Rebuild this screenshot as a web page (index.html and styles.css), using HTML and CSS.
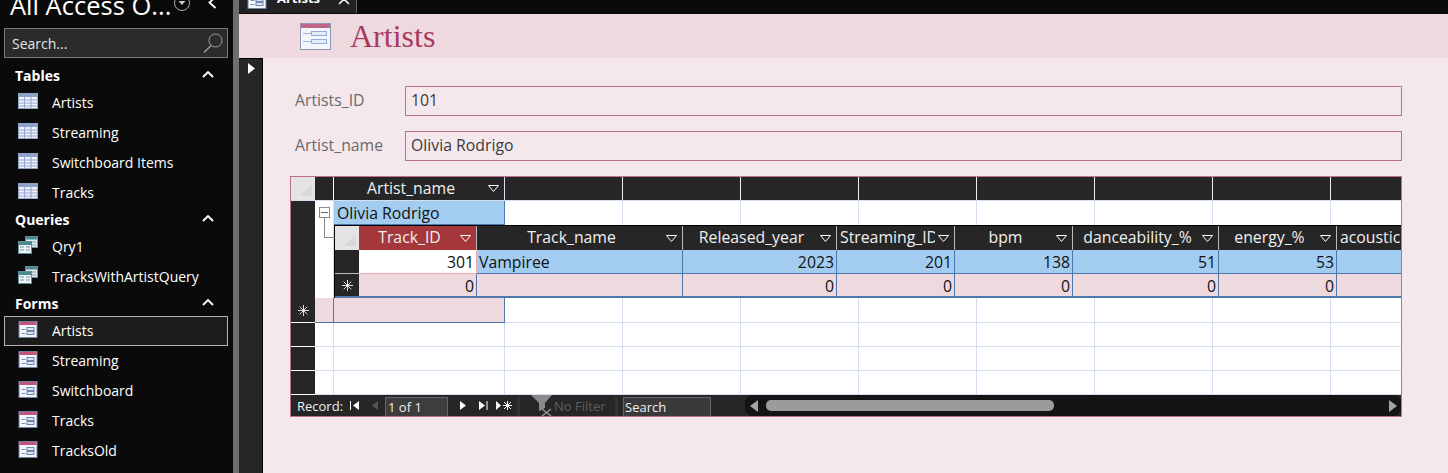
FILE: index.html
```html
<!DOCTYPE html>
<html>
<head>
<title>Artists</title>
<link rel="stylesheet" href="styles.css">
</head>
<body>
<svg class="defs" width="0" height="0">
<symbol id="i-table" viewBox="0 0 20 16">
<rect x="0.5" y="0.5" width="19" height="15" fill="#edf1fb" stroke="#93a3c6"/>
<rect x="1" y="1" width="18" height="3" fill="#8fa3cf"/>
<path d="M1 7h18M1 10h18M1 13h18M6.500 4v11M13 4v11" stroke="#96a6ca" fill="none"/>
</symbol>
<symbol id="i-query" viewBox="0 0 20 18">
<rect x="7.500" y="0.500" width="12" height="11" fill="#dfeaf0" stroke="#5f8f96"/>
<rect x="8" y="1" width="11" height="2.500" fill="#4d8b92"/>
<path d="M9 6h3M9 9h3M14 6h4M14 9h4" stroke="#8aa3b0"/>
<rect x="0.500" y="5.500" width="13" height="12" fill="#eef2f6" stroke="#5f8f96"/>
<rect x="1" y="6" width="12" height="3" fill="#4d8b92"/>
<path d="M2 11h4M2 14h4M8 11h4M8 14h4" stroke="#7f90a8"/>
</symbol>
<symbol id="i-form" viewBox="0 0 19 17">
<rect x="0.500" y="0.500" width="18" height="16" fill="#f2f5fb" stroke="#6f7f9f"/>
<rect x="1" y="1" width="17" height="3" fill="#c0567f"/>
<path d="M3 8.500h4M3 12.500h4" stroke="#7f90b0"/>
<rect x="8.500" y="6.500" width="7" height="3" fill="#dbe6f6" stroke="#6f85ac"/>
<rect x="8.500" y="10.500" width="7" height="3" fill="#dbe6f6" stroke="#6f85ac"/>
</symbol>
<symbol id="i-form-big" viewBox="0 0 31 27">
<rect x="0.500" y="0.500" width="30" height="26" fill="#f4f6fb" stroke="#8a97b5"/>
<rect x="1" y="1" width="29" height="4" fill="#c0668b"/>
<path d="M3 10.500h8M3 18.500h8" stroke="#9db6d8"/>
<rect x="11.500" y="8.500" width="15" height="4" fill="#e3edf9" stroke="#8fb0dc"/>
<rect x="11.500" y="16.500" width="15" height="4" fill="#e3edf9" stroke="#8fb0dc"/>
</symbol>
<symbol id="i-drop" viewBox="0 0 11 7">
<path d="M0.500 0.500h10M0.500 0.500l5 6 5-6" fill="none" stroke="#fff"/>
</symbol>
<symbol id="i-star" viewBox="0 0 13 13">
<path d="M6.500 0v13M0 6.500h13M2 2l9 9M11 2l-9 9" stroke="#fff"/>
</symbol>
<symbol id="i-up" viewBox="0 0 12 7">
<path d="M1 6l5-5 5 5" fill="none" stroke="#fff" stroke-width="1.800"/>
</symbol>
</svg>

<nav class="sidebar">
<div class="nav-top">
<div class="nav-title">All Access O...</div>
<svg class="nav-menu" width="18" height="18" viewBox="0 0 18 18"><circle cx="9" cy="9" r="7.500" fill="none" stroke="#aaa"/><path d="M5.500 7h7l-3.500 4z" fill="#ccc"/></svg>
<svg class="nav-close" width="9" height="13" viewBox="0 0 9 13"><path d="M7.500 1l-6 5.500 6 5.500" fill="none" stroke="#fff" stroke-width="1.800"/></svg>
</div>
<div class="nav-search">
<span>Search...</span>
<svg width="20" height="20" viewBox="0 0 20 20"><circle cx="12.500" cy="7.500" r="6.500" fill="none" stroke="#999"/><path d="M8 12.500L1 19.500" stroke="#999" stroke-width="1.500"/></svg>
</div>

<div class="nav-head first"><span>Tables</span><svg width="12" height="7"><use href="#i-up"/></svg></div>
<div class="nav-item"><svg width="20" height="16"><use href="#i-table"/></svg><span>Artists</span></div>
<div class="nav-item"><svg width="20" height="16"><use href="#i-table"/></svg><span>Streaming</span></div>
<div class="nav-item"><svg width="20" height="16"><use href="#i-table"/></svg><span>Switchboard Items</span></div>
<div class="nav-item"><svg width="20" height="16"><use href="#i-table"/></svg><span>Tracks</span></div>

<div class="nav-head"><span>Queries</span><svg width="12" height="7"><use href="#i-up"/></svg></div>
<div class="nav-item"><svg width="20" height="18"><use href="#i-query"/></svg><span>Qry1</span></div>
<div class="nav-item"><svg width="20" height="18"><use href="#i-query"/></svg><span>TracksWithArtistQuery</span></div>

<div class="nav-head"><span>Forms</span><svg width="12" height="7"><use href="#i-up"/></svg></div>
<div class="nav-item selected"><svg width="19" height="17"><use href="#i-form"/></svg><span>Artists</span></div>
<div class="nav-item"><svg width="19" height="17"><use href="#i-form"/></svg><span>Streaming</span></div>
<div class="nav-item"><svg width="19" height="17"><use href="#i-form"/></svg><span>Switchboard</span></div>
<div class="nav-item"><svg width="19" height="17"><use href="#i-form"/></svg><span>Tracks</span></div>
<div class="nav-item"><svg width="19" height="17"><use href="#i-form"/></svg><span>TracksOld</span></div>
<div class="nav-head"><span>Reports</span><svg width="12" height="7"><use href="#i-up"/></svg></div>
</nav>
<div class="splitter"></div>

<main class="workspace">
<div class="tabbar">
<div class="tab">
<svg width="20" height="17"><use href="#i-form"/></svg>
<b>Artists</b>
<svg class="tab-x" width="12" height="12" viewBox="0 0 12 12"><path d="M1 1l10 10M11 1L1 11" stroke="#fff" stroke-width="1.500"/></svg>
</div>
</div>
<header class="form-header">
<svg width="31" height="27"><use href="#i-form-big"/></svg>
<h1>Artists</h1>
</header>
<div class="form-body">
<div class="record-bar"><svg width="9" height="11" viewBox="0 0 9 11"><path d="M1 0l7 5.500-7 5.500z" fill="#fff"/></svg></div>
<div class="form-content">
<div class="field"><label>Artists_ID</label><div class="box">101</div></div>
<div class="field"><label>Artist_name</label><div class="box">Olivia Rodrigo</div></div>

<div class="sheet">
<div class="row head">
<div class="sel corner"><svg width="14" height="14" viewBox="0 0 14 14"><path d="M13 1v12H1z" fill="#d8d8d8"/></svg></div>
<div class="gut"></div>
<div class="col1 hcell"><span>Artist_name</span><svg width="11" height="7"><use href="#i-drop"/></svg></div>
<div class="rest"></div>
</div>
<div class="row">
<div class="sel"></div>
<div class="gut"><div class="tree-box"></div></div>
<div class="col1 val selected-val">Olivia Rodrigo</div>
<div class="rest"></div>
</div>

<div class="row subrow">
<div class="sel"></div>
<div class="gut tree-line"></div>
<div class="sub">
<div class="sub-grid sub-head">
<div class="corner"><svg width="14" height="14" viewBox="0 0 14 14"><path d="M13 1v12H1z" fill="#d8d8d8"/></svg></div>
<div class="hcell active"><span>Track_ID</span><svg width="11" height="7"><use href="#i-drop"/></svg></div>
<div class="hcell"><span>Track_name</span><svg width="11" height="7"><use href="#i-drop"/></svg></div>
<div class="hcell"><span>Released_year</span><svg width="11" height="7"><use href="#i-drop"/></svg></div>
<div class="hcell tight"><span>Streaming_ID</span><svg width="11" height="7"><use href="#i-drop"/></svg></div>
<div class="hcell"><span>bpm</span><svg width="11" height="7"><use href="#i-drop"/></svg></div>
<div class="hcell"><span>danceability_%</span><svg width="11" height="7"><use href="#i-drop"/></svg></div>
<div class="hcell"><span>energy_%</span><svg width="11" height="7"><use href="#i-drop"/></svg></div>
<div class="hcell tight last"><span>acousticness_%</span></div>
</div>
<div class="sub-grid sub-data">
<div class="rowsel"></div>
<div class="num current">301</div>
<div class="txt">Vampiree</div>
<div class="num">2023</div>
<div class="num">201</div>
<div class="num">138</div>
<div class="num">51</div>
<div class="num">53</div>
<div class="num"></div>
</div>
<div class="sub-grid sub-new">
<div class="rowsel"><svg width="11" height="11"><use href="#i-star"/></svg></div>
<div class="num">0</div>
<div class="txt"></div>
<div class="num">0</div>
<div class="num">0</div>
<div class="num">0</div>
<div class="num">0</div>
<div class="num">0</div>
<div class="num"></div>
</div>
</div>
</div>

<div class="row new-row">
<div class="sel"><svg width="11" height="11"><use href="#i-star"/></svg></div>
<div class="gut"></div>
<div class="col1 val"></div>
<div class="rest"></div>
</div>
<div class="row blank"><div class="sel"></div><div class="gut"></div><div class="col1"></div><div class="rest"></div></div>
<div class="row blank"><div class="sel"></div><div class="gut"></div><div class="col1"></div><div class="rest"></div></div>
<div class="row blank"><div class="sel"></div><div class="gut"></div><div class="col1"></div><div class="rest"></div></div>

<div class="navbar">
<span class="rec-label">Record:</span>
<svg class="nb first" width="10" height="9" viewBox="0 0 10 9"><path d="M0.500 0v9" stroke="#fff"/><path d="M9 0v9L3 4.500z" fill="#fff"/></svg>
<svg class="nb prev" width="7" height="9" viewBox="0 0 7 9"><path d="M6 0v9L0 4.500z" fill="#555"/></svg>
<div class="rec-box">1 of 1</div>
<svg class="nb next" width="7" height="9" viewBox="0 0 7 9"><path d="M1 0v9l6-4.500z" fill="#fff"/></svg>
<svg class="nb last" width="9" height="9" viewBox="0 0 9 9"><path d="M0 0v9l6-4.500z" fill="#fff"/><path d="M8 0v9" stroke="#fff"/></svg>
<svg class="nb add" width="16" height="9" viewBox="0 0 16 9"><path d="M0 0v9l5-4.500z" fill="#fff"/><path d="M11.500 0v9M7 4.500h9M8 1l7 7M15 1l-7 7" stroke="#fff"/></svg>
<div class="nb-sep"></div>
<svg class="funnel" width="23" height="21" viewBox="0 0 23 21"><path d="M0 0h21l-7 8v5l-6 3V8z" fill="#8a8a8a"/><path d="M11 14l9 7M20 14l-9 7" stroke="#999" stroke-width="1.300"/></svg>
<span class="no-filter">No Filter</span>
<div class="nb-sep two"></div>
<div class="search-box">Search</div>
<div class="hscroll">
<svg width="9" height="12" viewBox="0 0 9 12"><path d="M8 0v12L0 6z" fill="#a5a5a5"/></svg>
<div class="track"><div class="thumb"></div></div>
<svg width="9" height="12" viewBox="0 0 9 12"><path d="M1 0v12l8-6z" fill="#a5a5a5"/></svg>
</div>
</div>
</div>
</div>
</div>
</main>
</body>
</html>
```

FILE: styles.css
```css
* {
box-sizing: border-box;
}

html, body {
height: 473px;
overflow: hidden;
}

body {
margin: 0;
display: flex;
font-family: "Open Sans", "Noto Sans", sans-serif;
font-size: 14px;
background-color: #f5e8ec;
}

.defs {
position: absolute;
}

/* navigation pane */
.sidebar {
width: 233px;
flex: none;
height: 473px;
overflow: hidden;
background-color: #0a0a0a;
color: #fff;
}

.nav-top {
height: 28px;
overflow: hidden;
display: flex;
align-items: flex-start;
}

.nav-title {
margin: -12px 0 0 10px;
width: 163px;
font-size: 25.500px;
line-height: 34px;
white-space: nowrap;
}

.nav-menu {
margin-top: -6px;
}

.nav-close {
margin: -4px 0 0 17px;
}

.nav-search {
margin: 0 5px 0 4px;
height: 30px;
background-color: #2b2b2b;
border: 1px solid #7a7a7a;
display: flex;
align-items: center;
justify-content: space-between;
padding: 0 4px 0 7px;
color: #e6e6e6;
}

.nav-head {
height: 24px;
padding: 0 19px 2px 15px;
display: flex;
align-items: center;
justify-content: space-between;
font-weight: 700;
}

.nav-head svg {
margin-bottom: 2px;
}

.nav-head.first {
margin-top: 6px;
}

.nav-item {
height: 30px;
display: flex;
align-items: center;
margin-right: 5px;
margin-left: 4px;
padding: 0 0 2px 14px;
white-space: nowrap;
}

.nav-item svg {
flex: none;
width: 20px;
margin: 0 14px 2px 0;
}

.nav-item.selected {
background-color: #1c1c1c;
outline: 1px solid #b5b5b5;
outline-offset: -1px;
}

.splitter {
width: 6px;
flex: none;
background-color: #6e6e6e;
}

/* form area */
.workspace {
flex: 1;
min-width: 0;
display: flex;
flex-direction: column;
}

.tabbar {
height: 14px;
flex: none;
background-color: #0a0a0a;
overflow: hidden;
}

.tab {
width: 118px;
height: 13px;
background-color: #222;
border-right: 1px solid #666;
display: flex;
align-items: flex-end;
color: #fff;
padding-left: 8px;
overflow: hidden;
}

.tab svg {
flex: none;
margin-bottom: 4px;
}

.tab b {
margin: 0 0 8px 10px;
line-height: 14px;
font-size: 13px;
}

.tab .tab-x {
margin: 0 0 8px 18px;
}

.form-header {
height: 44px;
flex: none;
background-color: #eed9df;
display: flex;
align-items: center;
padding-left: 61px;
}

.form-header h1 {
margin: 0 0 0 19px;
font-family: "Liberation Serif", serif;
font-weight: 400;
font-size: 32px;
color: #a8395f;
}

.form-body {
flex: 1;
display: flex;
min-height: 0;
}

.record-bar {
width: 24px;
flex: none;
background-color: #262626;
border-top: 1px solid #000;
border-right: 1px solid #000;
padding: 4px 0 0 8px;
}

.record-bar svg {
display: block;
}

.form-content {
flex: 1;
min-width: 0;
padding: 28px 46px 0 27px;
}

.field {
display: flex;
align-items: center;
height: 30px;
margin-bottom: 15px;
}

.field label {
width: 115px;
flex: none;
padding: 0 0 3px 5px;
color: #6a6a6a;
font-size: 15.800px;
}

.box {
flex: 1;
height: 30px;
border: 1px solid #c0708f;
padding-left: 5px;
line-height: 26px;
color: #3a3a3a;
font-size: 15.800px;
}

/* datasheet */
.sheet {
border: 1px solid #c0708f;
font-size: 15.800px;
color: #111;
background-color: #fff;
}

.row {
display: flex;
height: 24px;
}

.sel {
width: 24px;
flex: none;
background-color: #262626;
display: flex;
align-items: center;
justify-content: center;
}

.gut {
width: 19px;
flex: none;
position: relative;
border-right: 1px solid #d5deef;
}

.col1 {
width: 171px;
flex: none;
border-right: 1px solid #d5deef;
}

.rest {
flex: 1;
min-width: 0;
background-image: repeating-linear-gradient(to right, transparent 0, transparent 117px, #d5deef 117px, #d5deef 118px);
}

.corner {
background-color: #e4e4e4;
display: flex;
align-items: flex-end;
justify-content: flex-end;
padding: 0 2px 3px 0;
}

.head {
border-bottom: 1px solid #d5deef;
}

.head .gut {
background-color: #262626;
border-right: 1px solid #fff;
}

.head .col1 {
background-color: #262626;
border-right: 1px solid #d5deef;
}

.head .rest {
background-color: #262626;
background-image: repeating-linear-gradient(to right, transparent 0, transparent 117px, #eee 117px, #eee 118px);
}

.hcell {
display: flex;
align-items: center;
color: #f0f0f0;
padding: 0 5px 0 0;
overflow: hidden;
}

.hcell span {
flex: 1;
min-width: 0;
padding: 0 0 2px 0;
text-align: center;
white-space: nowrap;
overflow: hidden;
}

.hcell svg {
flex: none;
}

.hcell.tight span {
text-align: left;
padding-left: 3px;
margin-right: 3px;
}

.selected-val {
background-color: #a3cdf0;
border-right: 1px solid #4e78ab;
border-bottom: 1px solid #4e78ab;
line-height: 24px;
padding-left: 3px;
}

.tree-box {
position: absolute;
left: 4px;
top: 6px;
width: 11px;
height: 11px;
border: 1px solid #888;
background: linear-gradient(#666, #666) center / 7px 1px no-repeat #fff;
}

.tree-line::before {
content: "";
position: absolute;
left: 9px;
top: -8px;
width: 10px;
height: 20px;
border-left: 1px solid #888;
border-bottom: 1px solid #888;
}

.subrow {
height: 73px;
}

.sub {
flex: 1;
min-width: 0;
border-top: 1px solid #000;
border-left: 1px solid #000;
overflow: hidden;
}

.sub-grid {
display: grid;
grid-template-columns: 24px 118px 206px 154px 118px 118px 146px 118px 90px;
height: 24px;
}

.sub-head {
background-color: #262626;
}

.sub-head .hcell {
border-right: 1px solid #bbb;
}

.hcell.active {
background-color: #a4373a;
}

.hcell.last {
padding: 0;
}

.rowsel {
background-color: #262626;
display: flex;
align-items: center;
justify-content: center;
border-bottom: 1px solid #bbb;
}

.num, .txt {
border-right: 1px solid #4e78ab;
border-bottom: 1px solid #4e78ab;
line-height: 24px;
padding: 0 2px;
overflow: hidden;
}

.num {
text-align: right;
}

.sub-data .num, .sub-data .txt {
background-color: #a3cdf0;
}

.sub-data .num.current {
background-color: #fff;
border-color: #f4a9ae;
}

.sub-new .num, .sub-new .txt {
background-color: #eed9df;
border-bottom-width: 2px;
}

.sub-new .rowsel {
border-bottom: 2px solid #4e78ab;
}

.new-row {
height: 25px;
}

.new-row .sel {
border-bottom: 1px solid #fff;
}

.new-row .gut, .new-row .col1 {
background-color: #eed9df;
border-right: 1px solid #4e78ab;
border-bottom: 1px solid #4e78ab;
}

.new-row .rest, .blank .rest {
background-image: repeating-linear-gradient(to right, transparent 0, transparent 117px, #d5deef 117px, #d5deef 118px), linear-gradient(to top, #d5deef 1px, transparent 1px);
}

.blank .sel {
border-bottom: 1px solid #fff;
}

.blank .gut, .blank .col1 {
border-bottom: 1px solid #d5deef;
}

/* record navigation */
.navbar {
height: 21px;
background-color: #262626;
display: flex;
align-items: center;
color: #f0f0f0;
font-size: 13px;
padding-left: 6px;
}

.rec-label {
width: 53px;
flex: none;
}

.nb {
flex: none;
}

.nb.prev {
margin-left: 12px;
}

.rec-box {
width: 63px;
height: 19px;
margin: 2px 0 0 6px;
background-color: #3d3d3d;
border: 1px solid #666;
border-bottom: 0;
padding-left: 2px;
line-height: 18px;
flex: none;
}

.nb.next {
margin-left: 11px;
}

.nb.last {
margin-left: 13px;
}

.nb.add {
margin-left: 8px;
}

.nb-sep {
width: 3px;
height: 19px;
margin: 2px 0 0 5px;
background-color: #333;
flex: none;
}

.funnel {
flex: none;
margin-left: 11px;
}

.no-filter {
color: #5e5e5e;
width: 59px;
flex: none;
white-space: nowrap;
}

.nb-sep.two {
margin-left: 2px;
}

.search-box {
width: 88px;
height: 19px;
margin: 2px 0 0 5px;
border: 1px solid #666;
border-bottom: 0;
background-color: #3a3a3a;
padding-left: 1px;
line-height: 18px;
flex: none;
}

.hscroll {
flex: 1;
min-width: 0;
height: 21px;
margin-left: 34px;
background-color: #141414;
border-radius: 8px;
display: flex;
align-items: center;
padding: 0 4px 0 5px;
}

.track {
flex: 1;
padding-left: 7px;
}

.thumb {
width: 288px;
height: 11px;
border-radius: 5px;
background-color: #9b9b9b;
}
```
